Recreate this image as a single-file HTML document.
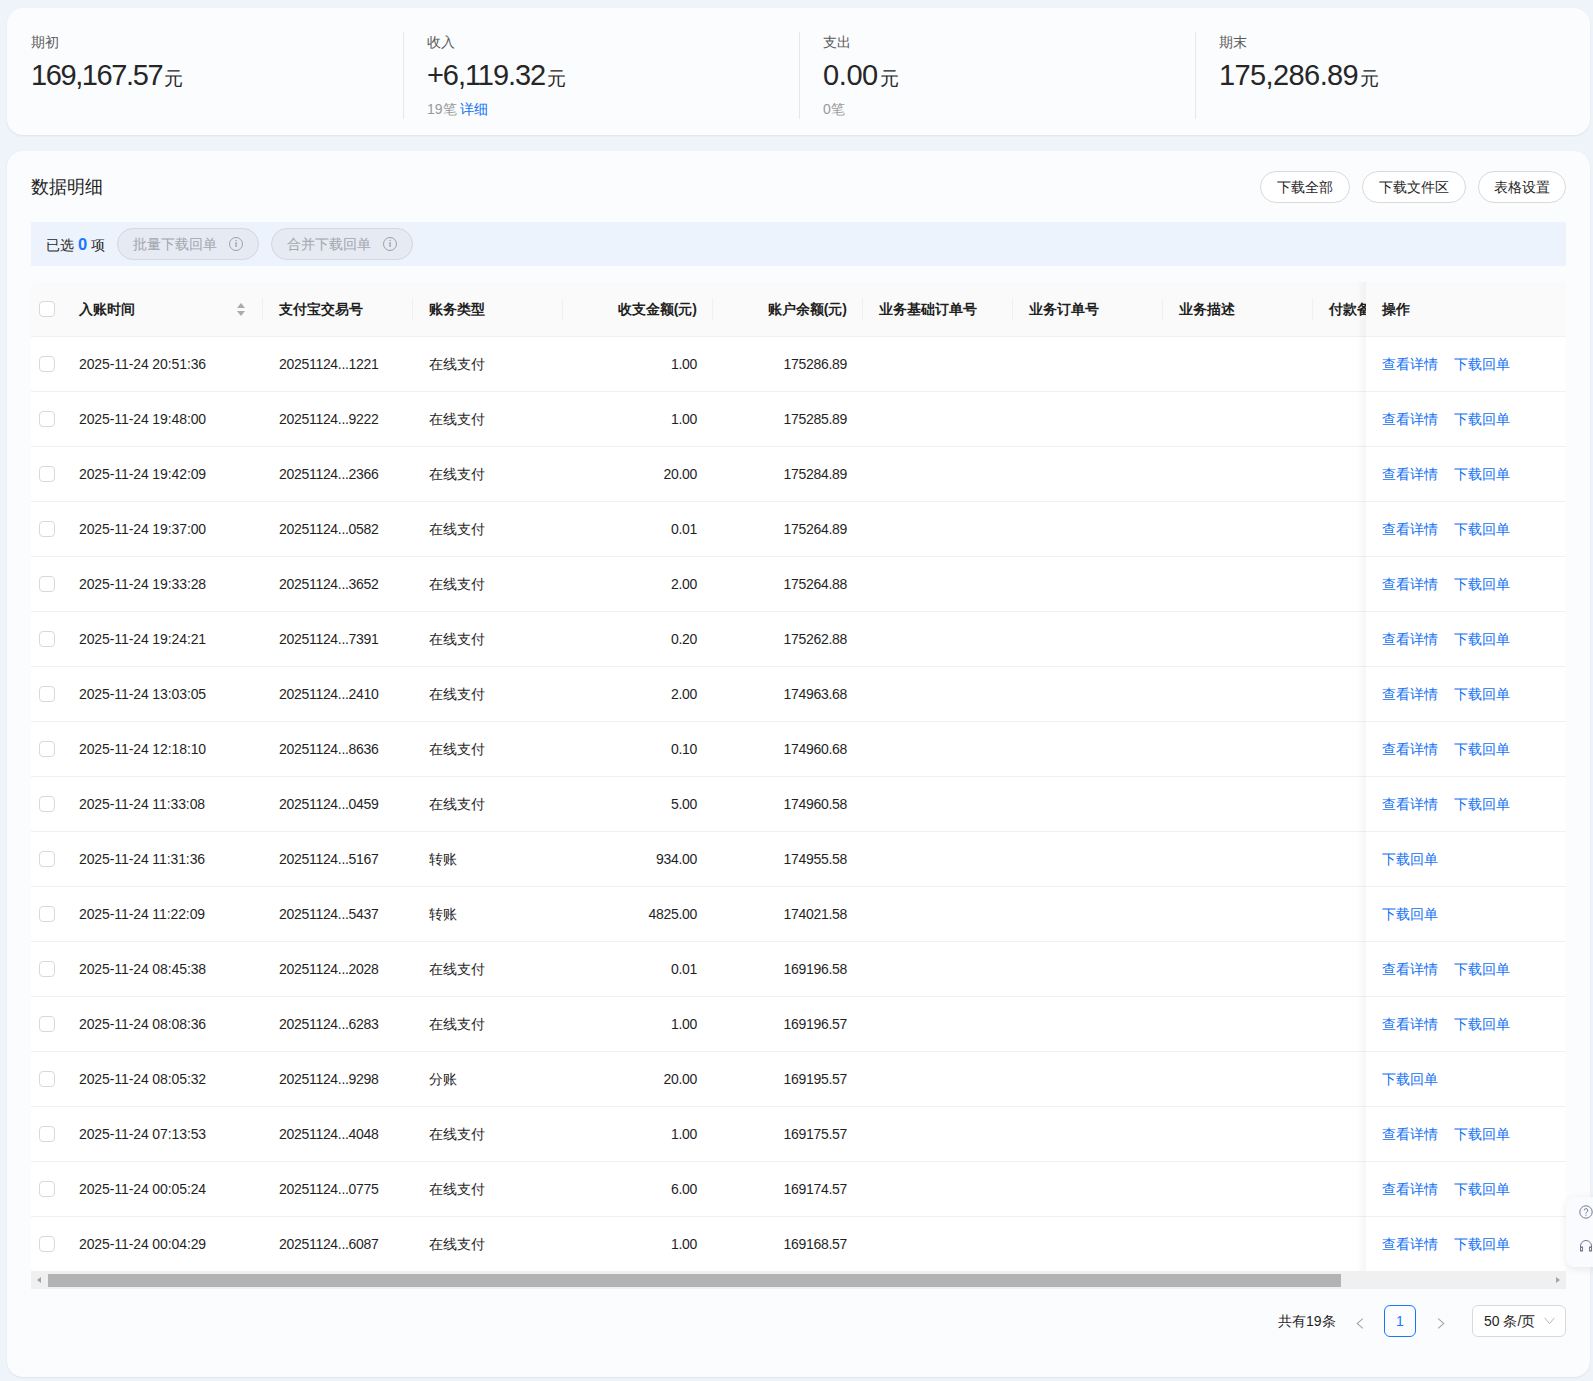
<!DOCTYPE html>
<html><head><meta charset="utf-8"><title>数据明细</title>
<style>
*{box-sizing:border-box;margin:0;padding:0}
html,body{width:1593px;height:1381px;overflow:hidden}
body{background:#eff3fa;font-family:"Liberation Sans",sans-serif;color:#1f1f1f;position:relative;font-size:14px}
.card1{position:absolute;left:7px;top:8px;width:1583px;height:127px;background:#fbfcfe;border-radius:16px;box-shadow:0 1px 2px rgba(20,30,60,0.07)}
.sitem{position:absolute;top:0;width:396px;height:127px}
.sdiv{position:absolute;left:0;top:24px;width:1px;height:87px;background:#e6e8ec}
.slab{position:absolute;left:24px;top:20px;font-size:14px;line-height:28px;color:#595959;white-space:nowrap}
.snum{position:absolute;left:24px;top:49px;line-height:36px;white-space:nowrap;color:#262626}
.snum .n{font-size:29px;letter-spacing:-1.4px}
.snum .yuan{font-size:19px;margin-left:2px}
.ssub{position:absolute;left:24px;top:87px;font-size:14px;line-height:28px;color:#999;white-space:nowrap}
.lnk{color:#1270f5}
.card2{position:absolute;left:7px;top:151px;width:1583px;height:1226px;background:#fbfcfe;border-radius:16px;box-shadow:0 1px 2px rgba(20,30,60,0.07)}
.title{position:absolute;left:24px;top:20px;font-size:18px;line-height:32px;color:#1f1f1f}
.btn{position:absolute;top:20px;height:32px;line-height:30px;border:1px solid #d9d9d9;border-radius:16px;background:#fff;text-align:center;font-size:14px;color:#1f1f1f;white-space:nowrap}
.selbar{position:absolute;left:24px;top:71px;width:1535px;height:44px;background:#edf3fd}
.seltxt{position:absolute;left:15px;top:0;line-height:44px;font-size:14px;color:#1f1f1f;white-space:nowrap}
.seltxt b{color:#1677ff;font-size:16.5px}
.dbtn{position:absolute;top:6px;width:142px;height:32px;line-height:30px;border:1px solid #d3d7de;border-radius:16px;background:#e5eaf3;color:#a2a6ad;font-size:14px;padding-left:15px;white-space:nowrap}
.info{position:absolute;left:111px;top:8px;width:14px;height:14px;border:1.2px solid #9fa2a8;border-radius:50%;font-size:9px;line-height:12px;text-align:center;color:#9fa2a8;font-weight:bold}
.tbl{position:absolute;left:24px;top:131px;width:1535px;height:1007px;background:#fff;border-radius:8px 0 0 0;overflow:hidden}
.thead{position:absolute;left:0;top:0;width:1535px;height:55px;background:#fafafa;border-bottom:1px solid #f0f0f0}
.th{position:absolute;top:0;line-height:54px;font-weight:bold;font-size:14px;color:#1f1f1f;white-space:nowrap}
.thr{text-align:right}
.vdiv{position:absolute;top:16px;width:1px;height:23px;background:#f0f0f0}
.sorter{position:absolute;left:206px;top:21px;width:9px;height:14px}
.sorter i{position:absolute;left:0;width:0;height:0;border-left:4.5px solid transparent;border-right:4.5px solid transparent}
.sorter .up{top:-0.5px;border-bottom:5.5px solid #ababab}
.sorter .dn{top:8px;border-top:5.5px solid #ababab}
.cb{position:absolute;width:16px;height:16px;border:1px solid #d9d9d9;border-radius:4px;background:#fff}
.tr{position:absolute;left:0;width:1535px;height:55px;border-bottom:1px solid #f0f0f0;background:#fff}
.td{position:absolute;top:0;line-height:54px;font-size:14px;color:#1f1f1f;white-space:nowrap}
.tdt{letter-spacing:-0.1px}
.tdn{letter-spacing:-0.3px}
.tdr{text-align:right;letter-spacing:-0.3px}
.fixcol{position:absolute;left:1335px;top:0;width:200px;height:989px}
.fshadow{position:absolute;left:-10px;top:0;width:10px;height:989px;background:linear-gradient(to right,rgba(0,0,0,0),rgba(0,0,0,0.035))}
.fhead{position:absolute;left:0;top:0;width:200px;height:55px;background:#fafafa;border-bottom:1px solid #f0f0f0}
.frow{position:absolute;left:0;width:200px;height:55px;background:#fff;border-bottom:1px solid #f0f0f0}
.lk{position:absolute;top:0;line-height:54px;font-size:14px;color:#1270f5;white-space:nowrap}
.sbar{position:absolute;left:0;top:989px;width:1535px;height:18px;background:#f0f0f0}
.sthumb{position:absolute;left:17px;top:3px;width:1293px;height:13px;background:#b3b3b3}
.sarl{position:absolute;left:6px;top:6px;width:0;height:0;border-top:3.5px solid transparent;border-bottom:3.5px solid transparent;border-right:4px solid #a3a3a3}
.sarr{position:absolute;left:1525px;top:6px;width:0;height:0;border-top:3.5px solid transparent;border-bottom:3.5px solid transparent;border-left:4px solid #a3a3a3}
.pager{position:absolute;left:0;top:1154px;width:1583px;height:32px}
.total{position:absolute;left:1271px;top:0;line-height:32px;font-size:14px;color:#1f1f1f;white-space:nowrap}
.parr{position:absolute;top:13px}
.pcur{position:absolute;left:1377px;top:0;width:32px;height:32px;border:1px solid #1677ff;border-radius:6px;text-align:center;line-height:30px;color:#1677ff;font-size:14px}
.psel{position:absolute;left:1465px;top:0;width:94px;height:32px;border:1px solid #d9d9d9;border-radius:6px;background:#fff;line-height:30px;padding-left:11px;font-size:14px;color:#1f1f1f;white-space:nowrap}
.chev{position:absolute;left:71px;top:11px}
.sidepanel{position:absolute;left:1566px;top:1197px;width:40px;height:70px;background:#fafbfe;border-radius:8px;box-shadow:0 2px 8px rgba(0,0,0,0.08)}
.ic1{position:absolute;left:13px;top:8px}
.ic2{position:absolute;left:13px;top:42px}

</style></head><body>
<div class="card1">
<div class="sitem" style="left:0px">
<div class="slab">期初</div>
<div class="snum"><span class="n" style="letter-spacing:-1.4px">169,167.57</span><span class="yuan">元</span></div>
</div>
<div class="sitem" style="left:396px">
<div class="sdiv"></div>
<div class="slab">收入</div>
<div class="snum"><span class="n" style="letter-spacing:-1.07px">+6,119.32</span><span class="yuan">元</span></div>
<div class="ssub">19笔 <span class="lnk">详细</span></div>
</div>
<div class="sitem" style="left:792px">
<div class="sdiv"></div>
<div class="slab">支出</div>
<div class="snum"><span class="n" style="letter-spacing:-0.4px">0.00</span><span class="yuan">元</span></div>
<div class="ssub">0笔</div>
</div>
<div class="sitem" style="left:1188px">
<div class="sdiv"></div>
<div class="slab">期末</div>
<div class="snum"><span class="n" style="letter-spacing:-0.6px">175,286.89</span><span class="yuan">元</span></div>
</div>
</div>
<div class="card2">
<div class="title">数据明细</div>
<div class="btn" style="left:1253px;width:90px">下载全部</div>
<div class="btn" style="left:1355px;width:104px">下载文件区</div>
<div class="btn" style="left:1471px;width:88px">表格设置</div>
<div class="selbar">
  <span class="seltxt">已选 <b>0</b> 项</span>
  <div class="dbtn" style="left:86px">批量下载回单<span class="info">i</span></div>
  <div class="dbtn" style="left:240px">合并下载回单<span class="info">i</span></div>
</div>
<div class="tbl">
<div class="thead">
<div class="cb" style="left:8px;top:19px"></div>
<div class="th" style="left:48px">入账时间</div>
<div class="sorter"><i class="up"></i><i class="dn"></i></div>
<div class="vdiv" style="left:231px"></div>
<div class="vdiv" style="left:381px"></div>
<div class="vdiv" style="left:531px"></div>
<div class="vdiv" style="left:681px"></div>
<div class="vdiv" style="left:831px"></div>
<div class="vdiv" style="left:981px"></div>
<div class="vdiv" style="left:1131px"></div>
<div class="vdiv" style="left:1281px"></div>
<div class="th" style="left:248px">支付宝交易号</div>
<div class="th" style="left:398px">账务类型</div>
<div class="th thr" style="left:548px;width:118px">收支金额(元)</div>
<div class="th thr" style="left:698px;width:118px">账户余额(元)</div>
<div class="th" style="left:848px">业务基础订单号</div>
<div class="th" style="left:998px">业务订单号</div>
<div class="th" style="left:1148px">业务描述</div>
<div class="th" style="left:1298px">付款备注</div>
</div>
<div class="tr" style="top:55px">
<div class="cb" style="left:8px;top:19px"></div>
<div class="td tdt" style="left:48px">2025-11-24 20:51:36</div>
<div class="td tdn" style="left:248px">20251124...1221</div>
<div class="td" style="left:398px">在线支付</div>
<div class="td tdr" style="left:548px;width:118px">1.00</div>
<div class="td tdr" style="left:698px;width:118px">175286.89</div>
</div>
<div class="tr" style="top:110px">
<div class="cb" style="left:8px;top:19px"></div>
<div class="td tdt" style="left:48px">2025-11-24 19:48:00</div>
<div class="td tdn" style="left:248px">20251124...9222</div>
<div class="td" style="left:398px">在线支付</div>
<div class="td tdr" style="left:548px;width:118px">1.00</div>
<div class="td tdr" style="left:698px;width:118px">175285.89</div>
</div>
<div class="tr" style="top:165px">
<div class="cb" style="left:8px;top:19px"></div>
<div class="td tdt" style="left:48px">2025-11-24 19:42:09</div>
<div class="td tdn" style="left:248px">20251124...2366</div>
<div class="td" style="left:398px">在线支付</div>
<div class="td tdr" style="left:548px;width:118px">20.00</div>
<div class="td tdr" style="left:698px;width:118px">175284.89</div>
</div>
<div class="tr" style="top:220px">
<div class="cb" style="left:8px;top:19px"></div>
<div class="td tdt" style="left:48px">2025-11-24 19:37:00</div>
<div class="td tdn" style="left:248px">20251124...0582</div>
<div class="td" style="left:398px">在线支付</div>
<div class="td tdr" style="left:548px;width:118px">0.01</div>
<div class="td tdr" style="left:698px;width:118px">175264.89</div>
</div>
<div class="tr" style="top:275px">
<div class="cb" style="left:8px;top:19px"></div>
<div class="td tdt" style="left:48px">2025-11-24 19:33:28</div>
<div class="td tdn" style="left:248px">20251124...3652</div>
<div class="td" style="left:398px">在线支付</div>
<div class="td tdr" style="left:548px;width:118px">2.00</div>
<div class="td tdr" style="left:698px;width:118px">175264.88</div>
</div>
<div class="tr" style="top:330px">
<div class="cb" style="left:8px;top:19px"></div>
<div class="td tdt" style="left:48px">2025-11-24 19:24:21</div>
<div class="td tdn" style="left:248px">20251124...7391</div>
<div class="td" style="left:398px">在线支付</div>
<div class="td tdr" style="left:548px;width:118px">0.20</div>
<div class="td tdr" style="left:698px;width:118px">175262.88</div>
</div>
<div class="tr" style="top:385px">
<div class="cb" style="left:8px;top:19px"></div>
<div class="td tdt" style="left:48px">2025-11-24 13:03:05</div>
<div class="td tdn" style="left:248px">20251124...2410</div>
<div class="td" style="left:398px">在线支付</div>
<div class="td tdr" style="left:548px;width:118px">2.00</div>
<div class="td tdr" style="left:698px;width:118px">174963.68</div>
</div>
<div class="tr" style="top:440px">
<div class="cb" style="left:8px;top:19px"></div>
<div class="td tdt" style="left:48px">2025-11-24 12:18:10</div>
<div class="td tdn" style="left:248px">20251124...8636</div>
<div class="td" style="left:398px">在线支付</div>
<div class="td tdr" style="left:548px;width:118px">0.10</div>
<div class="td tdr" style="left:698px;width:118px">174960.68</div>
</div>
<div class="tr" style="top:495px">
<div class="cb" style="left:8px;top:19px"></div>
<div class="td tdt" style="left:48px">2025-11-24 11:33:08</div>
<div class="td tdn" style="left:248px">20251124...0459</div>
<div class="td" style="left:398px">在线支付</div>
<div class="td tdr" style="left:548px;width:118px">5.00</div>
<div class="td tdr" style="left:698px;width:118px">174960.58</div>
</div>
<div class="tr" style="top:550px">
<div class="cb" style="left:8px;top:19px"></div>
<div class="td tdt" style="left:48px">2025-11-24 11:31:36</div>
<div class="td tdn" style="left:248px">20251124...5167</div>
<div class="td" style="left:398px">转账</div>
<div class="td tdr" style="left:548px;width:118px">934.00</div>
<div class="td tdr" style="left:698px;width:118px">174955.58</div>
</div>
<div class="tr" style="top:605px">
<div class="cb" style="left:8px;top:19px"></div>
<div class="td tdt" style="left:48px">2025-11-24 11:22:09</div>
<div class="td tdn" style="left:248px">20251124...5437</div>
<div class="td" style="left:398px">转账</div>
<div class="td tdr" style="left:548px;width:118px">4825.00</div>
<div class="td tdr" style="left:698px;width:118px">174021.58</div>
</div>
<div class="tr" style="top:660px">
<div class="cb" style="left:8px;top:19px"></div>
<div class="td tdt" style="left:48px">2025-11-24 08:45:38</div>
<div class="td tdn" style="left:248px">20251124...2028</div>
<div class="td" style="left:398px">在线支付</div>
<div class="td tdr" style="left:548px;width:118px">0.01</div>
<div class="td tdr" style="left:698px;width:118px">169196.58</div>
</div>
<div class="tr" style="top:715px">
<div class="cb" style="left:8px;top:19px"></div>
<div class="td tdt" style="left:48px">2025-11-24 08:08:36</div>
<div class="td tdn" style="left:248px">20251124...6283</div>
<div class="td" style="left:398px">在线支付</div>
<div class="td tdr" style="left:548px;width:118px">1.00</div>
<div class="td tdr" style="left:698px;width:118px">169196.57</div>
</div>
<div class="tr" style="top:770px">
<div class="cb" style="left:8px;top:19px"></div>
<div class="td tdt" style="left:48px">2025-11-24 08:05:32</div>
<div class="td tdn" style="left:248px">20251124...9298</div>
<div class="td" style="left:398px">分账</div>
<div class="td tdr" style="left:548px;width:118px">20.00</div>
<div class="td tdr" style="left:698px;width:118px">169195.57</div>
</div>
<div class="tr" style="top:825px">
<div class="cb" style="left:8px;top:19px"></div>
<div class="td tdt" style="left:48px">2025-11-24 07:13:53</div>
<div class="td tdn" style="left:248px">20251124...4048</div>
<div class="td" style="left:398px">在线支付</div>
<div class="td tdr" style="left:548px;width:118px">1.00</div>
<div class="td tdr" style="left:698px;width:118px">169175.57</div>
</div>
<div class="tr" style="top:880px">
<div class="cb" style="left:8px;top:19px"></div>
<div class="td tdt" style="left:48px">2025-11-24 00:05:24</div>
<div class="td tdn" style="left:248px">20251124...0775</div>
<div class="td" style="left:398px">在线支付</div>
<div class="td tdr" style="left:548px;width:118px">6.00</div>
<div class="td tdr" style="left:698px;width:118px">169174.57</div>
</div>
<div class="tr" style="top:935px">
<div class="cb" style="left:8px;top:19px"></div>
<div class="td tdt" style="left:48px">2025-11-24 00:04:29</div>
<div class="td tdn" style="left:248px">20251124...6087</div>
<div class="td" style="left:398px">在线支付</div>
<div class="td tdr" style="left:548px;width:118px">1.00</div>
<div class="td tdr" style="left:698px;width:118px">169168.57</div>
</div>
<div class="fixcol">
<div class="fshadow"></div>
<div class="fhead"><span class="th" style="left:16px">操作</span></div>
<div class="frow" style="top:55px">
<span class="lk" style="left:16px">查看详情</span><span class="lk" style="left:88px">下载回单</span>
</div>
<div class="frow" style="top:110px">
<span class="lk" style="left:16px">查看详情</span><span class="lk" style="left:88px">下载回单</span>
</div>
<div class="frow" style="top:165px">
<span class="lk" style="left:16px">查看详情</span><span class="lk" style="left:88px">下载回单</span>
</div>
<div class="frow" style="top:220px">
<span class="lk" style="left:16px">查看详情</span><span class="lk" style="left:88px">下载回单</span>
</div>
<div class="frow" style="top:275px">
<span class="lk" style="left:16px">查看详情</span><span class="lk" style="left:88px">下载回单</span>
</div>
<div class="frow" style="top:330px">
<span class="lk" style="left:16px">查看详情</span><span class="lk" style="left:88px">下载回单</span>
</div>
<div class="frow" style="top:385px">
<span class="lk" style="left:16px">查看详情</span><span class="lk" style="left:88px">下载回单</span>
</div>
<div class="frow" style="top:440px">
<span class="lk" style="left:16px">查看详情</span><span class="lk" style="left:88px">下载回单</span>
</div>
<div class="frow" style="top:495px">
<span class="lk" style="left:16px">查看详情</span><span class="lk" style="left:88px">下载回单</span>
</div>
<div class="frow" style="top:550px">
<span class="lk" style="left:16px">下载回单</span>
</div>
<div class="frow" style="top:605px">
<span class="lk" style="left:16px">下载回单</span>
</div>
<div class="frow" style="top:660px">
<span class="lk" style="left:16px">查看详情</span><span class="lk" style="left:88px">下载回单</span>
</div>
<div class="frow" style="top:715px">
<span class="lk" style="left:16px">查看详情</span><span class="lk" style="left:88px">下载回单</span>
</div>
<div class="frow" style="top:770px">
<span class="lk" style="left:16px">下载回单</span>
</div>
<div class="frow" style="top:825px">
<span class="lk" style="left:16px">查看详情</span><span class="lk" style="left:88px">下载回单</span>
</div>
<div class="frow" style="top:880px">
<span class="lk" style="left:16px">查看详情</span><span class="lk" style="left:88px">下载回单</span>
</div>
<div class="frow" style="top:935px">
<span class="lk" style="left:16px">查看详情</span><span class="lk" style="left:88px">下载回单</span>
</div>
</div>
<div class="sbar"><div class="sthumb"></div><div class="sarl"></div><div class="sarr"></div></div>
</div>
<div class="pager">
  <span class="total">共有19条</span>
  <svg class="parr" style="left:1349px" width="8" height="11" viewBox="0 0 8 11"><polyline points="6.8,0.6 1.2,5.5 6.8,10.4" fill="none" stroke="#a6a6a6" stroke-width="1.1"/></svg>
  <span class="pcur">1</span>
  <svg class="parr" style="left:1430px" width="8" height="11" viewBox="0 0 8 11"><polyline points="1.2,0.6 6.8,5.5 1.2,10.4" fill="none" stroke="#a6a6a6" stroke-width="1.1"/></svg>
  <span class="psel">50 条/页<svg class="chev" width="11" height="8" viewBox="0 0 11 8"><polyline points="0.6,0.8 5.5,6.6 10.4,0.8" fill="none" stroke="#b8b8b8" stroke-width="1"/></svg></span>
</div>
</div>
<div class="sidepanel">
 <svg class="ic1" width="14" height="14" viewBox="0 0 14 14"><circle cx="7" cy="7" r="6.2" fill="none" stroke="#737891" stroke-width="1"/><path d="M5.2 5.4a1.8 1.8 0 1 1 2.6 1.6c-.5.3-.8.6-.8 1.2v.4" fill="none" stroke="#737891" stroke-width="1"/><circle cx="7" cy="10.2" r=".6" fill="#737891"/></svg>
 <svg class="ic2" width="14" height="14" viewBox="0 0 14 14"><path d="M1.5 11V7a5.5 5.5 0 0 1 11 0v4" fill="none" stroke="#737891" stroke-width="1"/><rect x="1.5" y="8" width="2" height="4" fill="none" stroke="#737891" stroke-width="1"/><rect x="10.5" y="8" width="2" height="4" fill="none" stroke="#737891" stroke-width="1"/></svg>
</div>
</body></html>
